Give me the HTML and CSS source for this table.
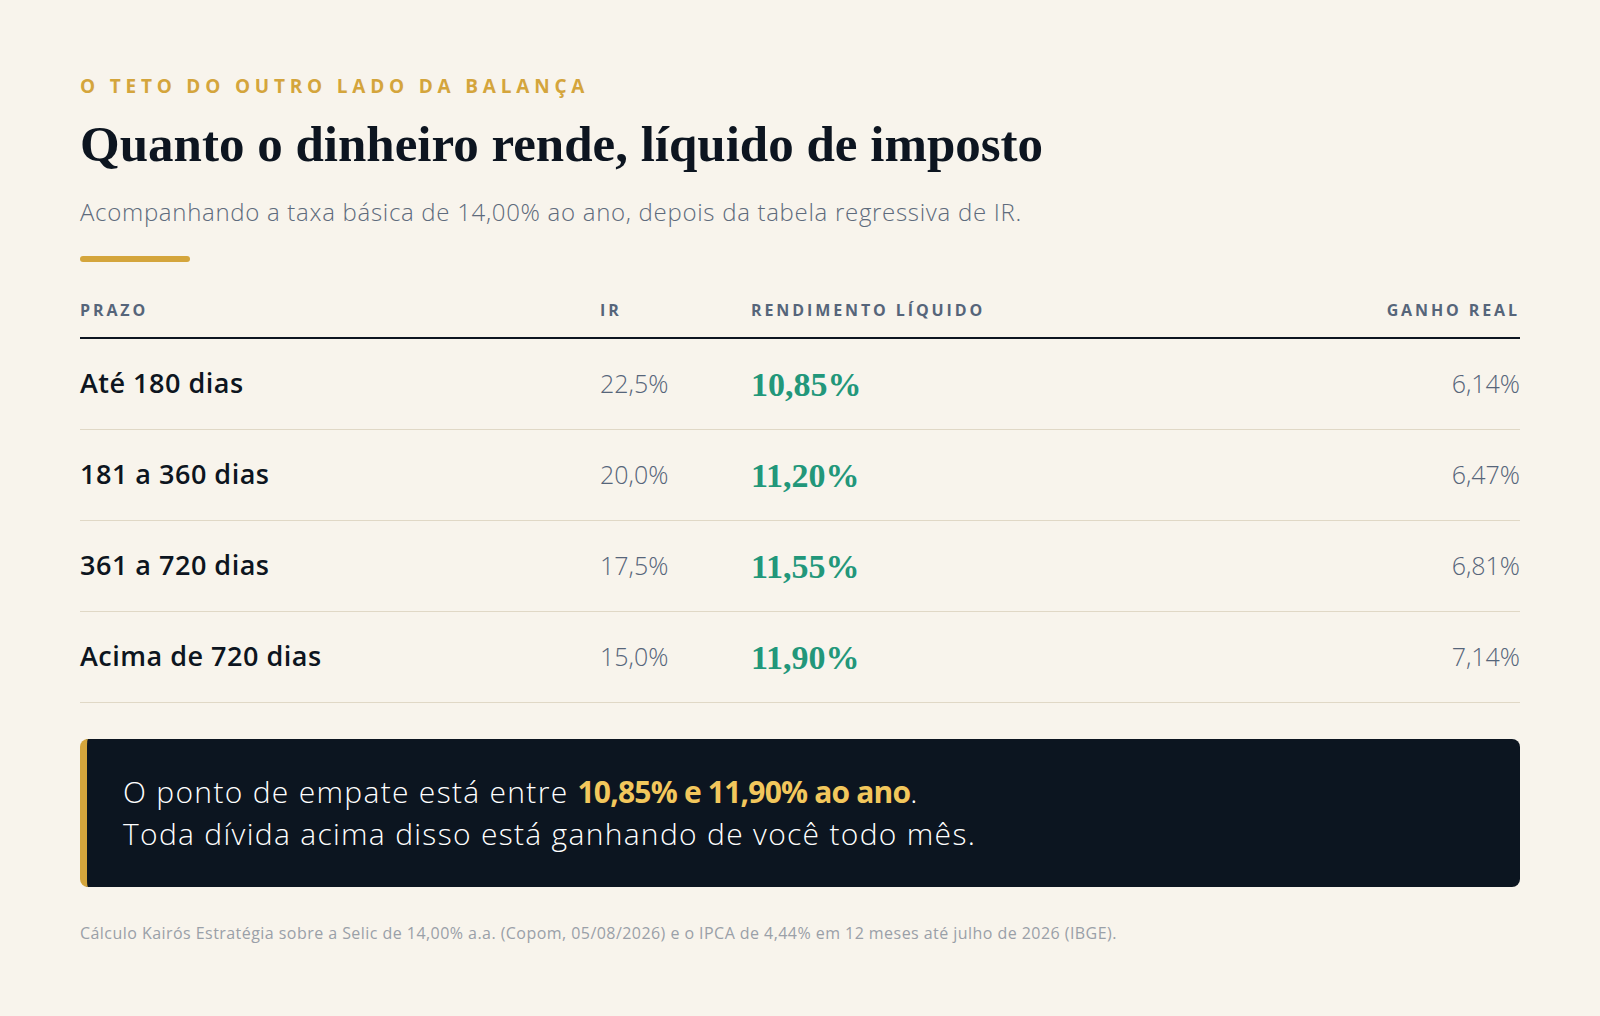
FILE: index.html
```html
<!DOCTYPE html>
<html lang="pt-BR">
<head>
<meta charset="utf-8">
<title>Quanto o dinheiro rende</title>
<link rel="stylesheet" href="styles.css">
</head>
<body>
<main class="page">
  <p class="eyebrow">O TETO DO OUTRO LADO DA BALANÇA</p>
  <h1 class="title">Quanto o dinheiro rende, líquido de imposto</h1>
  <p class="subtitle">Acompanhando a taxa básica de 14,00% ao ano, depois da tabela regressiva de IR.</p>
  <div class="rule"></div>
  <table class="rates">
    <thead>
      <tr>
        <th class="c-prazo">PRAZO</th>
        <th class="c-ir">IR</th>
        <th class="c-liq">RENDIMENTO LÍQUIDO</th>
        <th class="c-real">GANHO REAL</th>
      </tr>
    </thead>
    <tbody>
      <tr>
        <td class="c-prazo">Até 180 dias</td>
        <td class="c-ir">22,5%</td>
        <td class="c-liq">10,85%</td>
        <td class="c-real">6,14%</td>
      </tr>
      <tr>
        <td class="c-prazo">181 a 360 dias</td>
        <td class="c-ir">20,0%</td>
        <td class="c-liq">11,20%</td>
        <td class="c-real">6,47%</td>
      </tr>
      <tr>
        <td class="c-prazo">361 a 720 dias</td>
        <td class="c-ir">17,5%</td>
        <td class="c-liq">11,55%</td>
        <td class="c-real">6,81%</td>
      </tr>
      <tr>
        <td class="c-prazo">Acima de 720 dias</td>
        <td class="c-ir">15,0%</td>
        <td class="c-liq">11,90%</td>
        <td class="c-real">7,14%</td>
      </tr>
    </tbody>
  </table>
  <div class="callout">
    <p>O ponto de empate está entre <strong>10,85% e 11,90% ao ano</strong>.<br>Toda dívida acima disso está ganhando de você todo mês.</p>
  </div>
  <p class="note">Cálculo Kairós Estratégia sobre a Selic de 14,00% a.a. (Copom, 05/08/2026) e o IPCA de 4,44% em 12 meses até julho de 2026 (IBGE).</p>
</main>
</body>
</html>
```
FILE: styles.css
```css
* { box-sizing: border-box; }
html, body { margin: 0; padding: 0; }
body {
  background: #f8f4ec;
  font-family: "Open Sans", "Noto Sans", sans-serif;
  color: #0d1520;
}
.page {
  padding: 74px 80px 40px;
}
.eyebrow {
  margin: 0;
  font-size: 19px;
  line-height: 24px;
  font-weight: 700;
  letter-spacing: 4.8px;
  color: #d4a53c;
}
.title {
  margin: 15px 0 0;
  font-family: "Liberation Serif", serif;
  font-weight: 700;
  font-size: 51px;
  line-height: 62px;
  color: #0d1520;
}
.subtitle {
  margin: 22px 0 0;
  font-size: 24px;
  line-height: 30px;
  font-weight: 300;
  letter-spacing: 0.7px;
  color: #5e6b7c;
}
.rule {
  margin-top: 29px;
  width: 110px;
  height: 6px;
  border-radius: 3px;
  background: #d4a53c;
}
.rates {
  margin-top: 38px;
  width: 100%;
  border-collapse: collapse;
}
.rates th {
  padding: 0 0 17px;
  font-size: 16px;
  line-height: 20px;
  font-weight: 700;
  letter-spacing: 2.9px;
  color: #56657a;
  text-align: left;
  border-bottom: 2px solid #0d1520;
}
.rates td {
  padding: 26px 0 28px;
  line-height: 36px;
  border-bottom: 1px solid #e0d8c6;
  vertical-align: middle;
}
.rates .c-prazo { width: 520px; }
.rates .c-ir { width: 151px; }
.rates th.c-real, .rates td.c-real { text-align: right; }
.rates td.c-prazo {
  font-size: 27px;
  font-weight: 600;
  letter-spacing: 0.5px;
  color: #0d1520;
}
.rates td.c-ir, .rates td.c-real {
  font-size: 25px;
  font-weight: 300;
  color: #56657a;
}
.rates td.c-liq {
  font-family: "Liberation Serif", serif;
  font-size: 34px;
  font-weight: 700;
  color: #22977a;
  padding-top: 28px;
  padding-bottom: 26px;
}
.callout {
  margin-top: 36px;
  background: #0c1520;
  border-left: 7px solid #d4a53c;
  border-radius: 8px;
  padding: 32px 36px;
}
.callout p {
  margin: 0;
  font-size: 30px;
  line-height: 42px;
  font-weight: 300;
  letter-spacing: 1.3px;
  color: #ffffff;
}
.callout strong {
  font-weight: 700;
  letter-spacing: -0.8px;
  color: #f2c75c;
}
.note {
  margin: 34px 0 0;
  font-size: 16px;
  line-height: 24px;
  font-weight: 400;
  letter-spacing: 0.45px;
  color: #9aa0a8;
}
```
